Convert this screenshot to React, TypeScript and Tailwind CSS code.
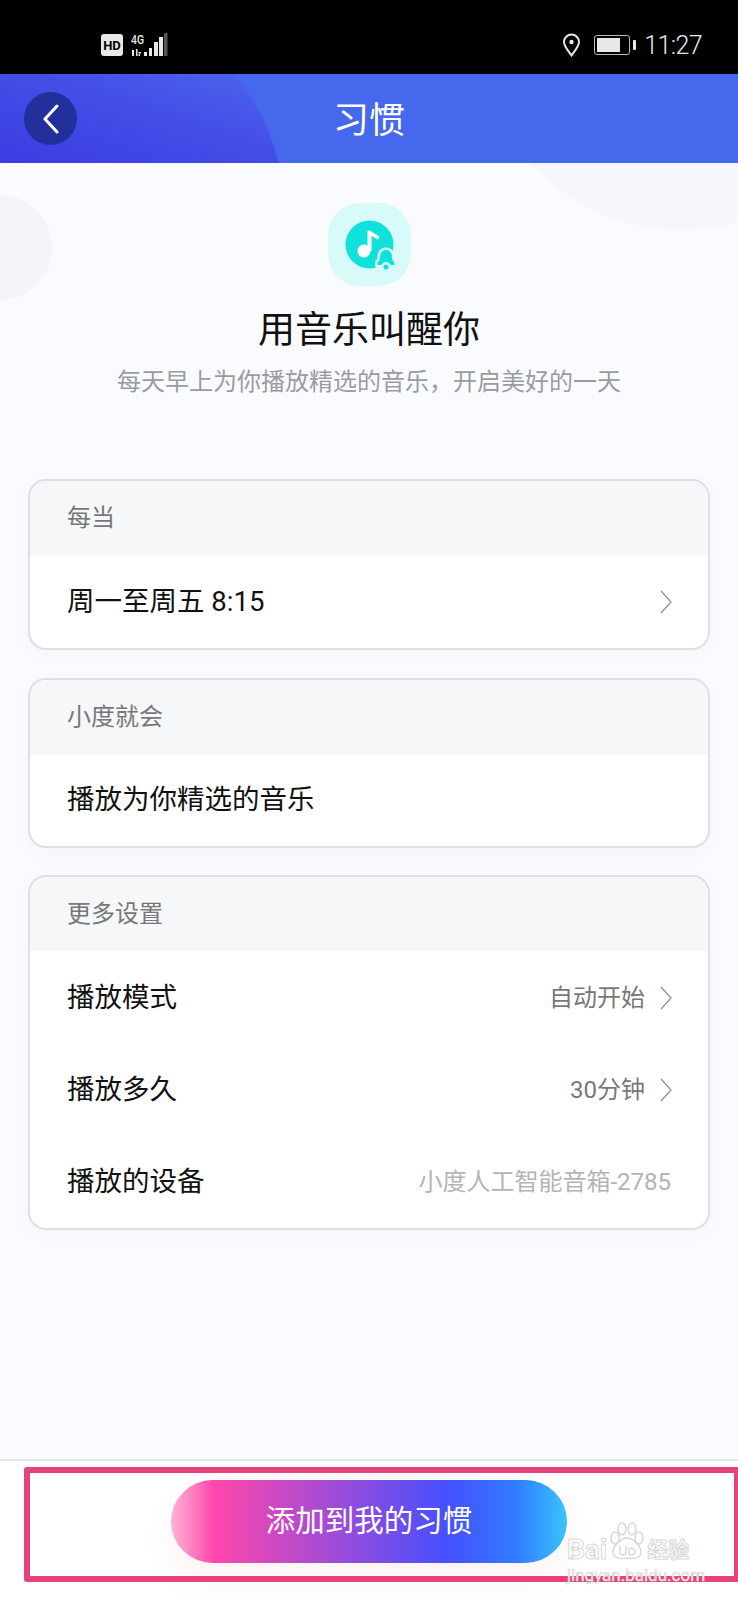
const font = "font-['Roboto','Noto_Sans_CJK_SC',sans-serif]";

function StatusBar() {
  return (
    <div className="flex h-[74px] items-center justify-between bg-black pl-[101px] pr-[36px] pt-[16px]">
      <div className="flex items-center gap-[8px]">
        <div className="flex h-[22px] w-[22px] items-center justify-center rounded-[3px] bg-[#e8e8e8] text-[13px] font-bold leading-none text-black">
          HD
        </div>
        <svg width="37" height="24" viewBox="0 0 37 24" className="overflow-visible text-[#e8e8e8]">
          <text x="0" y="11" fontSize="12" fontWeight="500" fill="currentColor" textLength="13" lengthAdjust="spacingAndGlyphs">4G</text>
          <path d="M1 17h2v6H1zM5 16h1.500v7H5zM7.500 19H10v1.500H7.500zM7.500 21H9v2H7.500z" fill="currentColor" />
          <rect x="13" y="19" width="3" height="4" fill="currentColor" />
          <rect x="18" y="15" width="3" height="8" fill="currentColor" />
          <rect x="23" y="9" width="4" height="14" fill="currentColor" />
          <rect x="28" y="4" width="4" height="19" fill="currentColor" />
          <rect x="33" y="0" width="3.500" height="23" fill="#555" />
        </svg>
      </div>
      <div className="flex items-center text-[#e8e8e8]">
        <svg width="19" height="24" viewBox="0 0 19 24" fill="none" className="mr-[13px]">
          <path d="M9.500 22.500C5 16.500 2 13 2 9a7.500 7.500 0 0 1 15 0c0 4-3 7.500-7.500 13.500z" stroke="currentColor" strokeWidth="2" />
          <circle cx="9.500" cy="9" r="2.200" fill="currentColor" />
        </svg>
        <div className="mr-[3px] flex h-[20px] w-[36px] items-center rounded-[3px] border border-[#bbb] p-[2px]">
          <div className="h-full w-[23px] bg-[#e8e8e8]" />
        </div>
        <div className="mr-[8px] h-[10px] w-[3px] rounded-[1px] bg-[#e8e8e8]" />
        <span className="text-[25px] font-light leading-none tracking-[-0.6px]">11:27</span>
      </div>
    </div>
  );
}

function Header() {
  return (
    <div className="relative flex h-[89px] items-center justify-center overflow-hidden bg-[#4568ec] pt-[5px]">
      <svg width="280" height="89" viewBox="0 0 280 89" className="absolute left-0 top-0">
        <defs>
          <linearGradient id="headerBlob" x1="0" y1="1" x2="1" y2="0">
            <stop offset="0" stopColor="#3b3ce0" />
            <stop offset="0.6" stopColor="#4550e8" />
            <stop offset="1" stopColor="#4b66ec" />
          </linearGradient>
        </defs>
        <path d="M0 0H235C255 25 270 55 279 89H0z" fill="url(#headerBlob)" />
      </svg>
      <button className="absolute left-[24px] top-[18px] flex h-[53px] w-[53px] items-center justify-center rounded-full bg-[#23309b]">
        <svg width="18" height="30" viewBox="0 0 18 30" fill="none">
          <path d="M15 2 3 15l12 13" stroke="#fff" strokeWidth="3" strokeLinecap="round" strokeLinejoin="round" />
        </svg>
      </button>
      <h1 className="relative text-[36px] font-normal leading-none text-white">习惯</h1>
    </div>
  );
}

function HabitIcon() {
  return (
    <div className="h-[83px] w-[83px] rounded-[32px] bg-[#d8fbfa]">
      <svg width="83" height="83" viewBox="0 0 83 83">
        <circle cx="41.500" cy="41.500" r="24" fill="#10e2db" />
        <circle cx="36" cy="48" r="6.500" fill="#fff" />
        <path d="M39.500 48V28l2 -.500 10 6-1.500 3-6.500-3.500V48z" fill="#fff" />
        <g stroke="#d8fbfa" strokeWidth="5" strokeLinejoin="round" paintOrder="stroke" fill="#10e2db">
          <path d="M58 47c-4 0-6 3-6 7 0 3-1 4-2.500 5.500V62h17v-2.500C65 58 64 57 64 54c0-4-2-7-6-7z" />
          <circle cx="58" cy="64" r="2.500" />
        </g>
      </svg>
    </div>
  );
}

function Arrow() {
  return (
    <svg width="14" height="26" viewBox="0 0 14 26" fill="none" className="ml-[14px]">
      <path d="M2 2l10 11L2 24" stroke="#8f8f8f" strokeWidth="1.200" />
    </svg>
  );
}

function Card({ title, children }: { title: string; children: React.ReactNode }) {
  return (
    <div className="overflow-hidden rounded-[18px] border-2 border-[#dfe0e2] bg-white shadow-[0_4px_16px_rgba(90,100,160,0.04)]">
      <div className="flex h-[74px] items-center bg-[#f6f7f9] pl-[37px] text-[24px] text-[#77787a]">
        {title}
      </div>
      {children}
    </div>
  );
}

function Row({
  label,
  value,
  arrow,
  muted,
  height = "h-[92px]",
}: {
  label: string;
  value?: string;
  arrow?: boolean;
  muted?: boolean;
  height?: string;
}) {
  return (
    <div className={`flex items-center justify-between pl-[37px] pr-[35px] ${height}`}>
      <span className="text-[27.500px] text-[#111]">{label}</span>
      <div className="flex items-center">
        {value && (
          <span className={muted ? "mr-[2px] text-[24px] text-[#b3b4b6]" : "text-[24px] text-[#77787a]"}>
            {value}
          </span>
        )}
        {arrow && <Arrow />}
      </div>
    </div>
  );
}

function Watermark() {
  return (
    <div className="absolute left-[567px] top-[1522px] w-[130px] text-white">
      <div className="flex items-end">
        <span className="text-[28px] font-bold leading-[24px] [-webkit-text-stroke:1px_#d8d8d8]">Bai</span>
        <svg width="40" height="40" viewBox="0 0 40 40" fill="none" stroke="#d8d8d8" strokeWidth="1.500">
          <ellipse cx="8" cy="16" rx="4" ry="6" />
          <ellipse cx="15" cy="7" rx="4" ry="6" />
          <ellipse cx="25" cy="7" rx="4" ry="6" />
          <ellipse cx="32" cy="16" rx="4" ry="6" />
          <path d="M20 16c-6 0-15 9-14 15 1 6 9 6 14 5 5 1 13 1 14-5 1-6-8-15-14-15z" />
          <path d="M13 24v6c0 4 6 4 6 0v-6M22 27c3-2 6 0 6 3s-4 4-6 2z" />
        </svg>
        <span className="whitespace-nowrap text-[21px] font-bold leading-[24px] [-webkit-text-stroke:1px_#d8d8d8]">经验</span>
      </div>
      <div className="mt-[5px] whitespace-nowrap text-[17px] leading-none [-webkit-text-stroke:0.6px_#d0d0d0]">
        jingyan.baidu.com
      </div>
    </div>
  );
}

export default function App() {
  return (
    <div className={`relative mx-auto h-[1600px] w-[738px] overflow-hidden bg-[#fafbff] ${font}`}>
      <div className="absolute left-[480px] top-[-170px] h-[400px] w-[400px] rounded-full bg-[#f6f7fd]" />
      <div className="absolute left-[-55px] top-[195px] h-[105px] w-[107px] rounded-full bg-[#f6f3fb]" />

      <div className="relative">
        <StatusBar />
        <Header />
      </div>

      <div className="relative flex flex-col items-center pt-[40px]">
        <HabitIcon />
        <h2 className="mt-[20px] text-[37px] font-normal leading-[50px] text-[#111]">用音乐叫醒你</h2>
        <p className="mt-[9px] text-[24px] leading-[34px] text-[#9a9ba0]">
          每天早上为你播放精选的音乐，开启美好的一天
        </p>
      </div>

      <div className="relative mt-[80px] flex flex-col gap-[28px] px-[28px]">
        <Card title="每当">
          <Row label="周一至周五 8:15" arrow height="h-[93px]" />
        </Card>
        <Card title="小度就会">
          <Row label="播放为你精选的音乐" />
        </Card>
        <div className="-mt-[1px]">
          <Card title="更多设置">
            <div className="pt-[1px]">
              <Row label="播放模式" value="自动开始" arrow />
              <Row label="播放多久" value="30分钟" arrow />
              <Row label="播放的设备" value="小度人工智能音箱-2785" muted />
            </div>
          </Card>
        </div>
      </div>

      <div className="absolute inset-x-0 bottom-0 flex h-[141px] justify-center border-t-2 border-[#e2e5e8] bg-white pt-[19px]">
        <button className="h-[83px] w-[396px] rounded-[42px] bg-[linear-gradient(90deg,#ffb4d6_0%,#ff46ac_11%,#4550ff_70%,#2f7cff_87%,#3ac4ff_100%)] text-[29.500px] text-white shadow-[0_18px_30px_rgba(200,130,100,0.08)]">
          添加到我的习惯
        </button>
      </div>

      <div className="absolute left-[24px] top-[1467px] h-[115px] w-[716px] rounded-[3px] border-[6px] border-[#e5437a]" />
      <Watermark />
    </div>
  );
}
